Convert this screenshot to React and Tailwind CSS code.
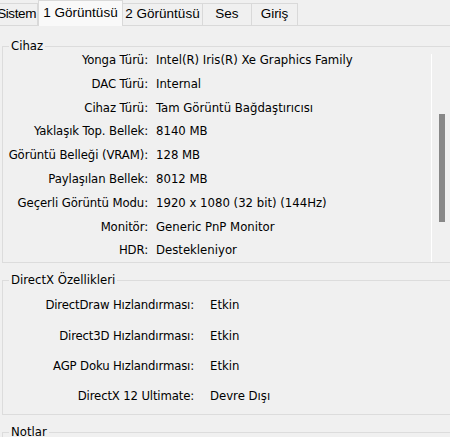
import React from "react";

const tabs = [
  { name: "Sistem", w: "w-[52px] ml-[-14px] justify-end pr-[1px] tracking-[-0.4px]" },
  { name: "1 Görüntüsü", w: "w-[85px] justify-center", active: true },
  { name: "2 Görüntüsü", w: "w-[80px] justify-center" },
  { name: "Ses", w: "w-[49px] justify-center" },
  { name: "Giriş", w: "w-[46px] justify-center" },
];

const device = [
  ["Yonga Türü:", "Intel(R) Iris(R) Xe Graphics Family"],
  ["DAC Türü:", "Internal"],
  ["Cihaz Türü:", "Tam Görüntü Bağdaştırıcısı"],
  ["Yaklaşık Top. Bellek:", "8140 MB"],
  ["Görüntü Belleği (VRAM):", "128 MB"],
  ["Paylaşılan Bellek:", "8012 MB"],
  ["Geçerli Görüntü Modu:", "1920 x 1080 (32 bit) (144Hz)"],
  ["Monitör:", "Generic PnP Monitor"],
  ["HDR:", "Destekleniyor"],
];

const dx = [
  ["DirectDraw Hızlandırması:", "Etkin"],
  ["Direct3D Hızlandırması:", "Etkin"],
  ["AGP Doku Hızlandırması:", "Etkin"],
  ["DirectX 12 Ultimate:", "Devre Dışı"],
];

const Group = ({ title, className, children }) => (
  <div className={`relative ml-[2px] w-[470px] border border-[#dcdcdc] ${className}`}>
    <span className="absolute left-[6px] top-[-10px] bg-[#f0f0f0] px-[2px] leading-[18px]">{title}</span>
    {children}
  </div>
);

export default function App() {
  return (
    <div
      className="w-[450px] h-[437px] overflow-hidden bg-[#f0f0f0] text-black text-[13px]"
      style={{ fontFamily: '"DejaVu Sans Condensed", "DejaVu Sans", sans-serif' }}
    >
      <div
        className="flex items-end h-[26px] border-b border-[#d9d9d9]"
        style={{ fontFamily: '"Liberation Sans", Arial, sans-serif' }}
      >
        {tabs.map((t) => (
          <div
            key={t.name}
            className={`flex shrink-0 items-center border-[#d9d9d9] border-t border-r text-[13.5px] ${t.w} ${
              t.active
                ? "h-[26px] bg-[#f9f9f9] border-l mb-[-1px]"
                : "h-[22px] bg-[#f0f0f0]"
            }`}
          >
            {t.name}
          </div>
        ))}
      </div>

      <Group title="Cihaz" className="mt-[20px] h-[217px]">
        <div className="flex h-full">
          <div className="flex flex-col w-[428px] pt-[1px]">
            {device.map(([k, v]) => (
              <div key={k} className="flex items-center h-[23.9px]">
                <span className="w-[145px] text-right whitespace-nowrap tracking-[-0.1px]">{k}</span>
                <span className="ml-[8px] whitespace-nowrap">{v}</span>
              </div>
            ))}
          </div>
          <div className="w-px bg-white mt-[7px]" />
          <div className="flex flex-col">
            <div className="ml-[7px] mt-[67px] h-[108px] w-[6px] bg-[#888888]" />
          </div>
        </div>
      </Group>

      <Group title="DirectX Özellikleri" className="mt-[17px] h-[135px]">
        <div className="flex flex-col pt-[9px]">
          {dx.map(([k, v]) => (
            <div key={k} className="flex items-center h-[30.3px]">
              <span className="w-[191px] text-right whitespace-nowrap tracking-[-0.15px]">{k}</span>
              <span className="ml-[16px] whitespace-nowrap">{v}</span>
            </div>
          ))}
        </div>
      </Group>

      <Group title="Notlar" className="mt-[17px] h-[60px]" />
    </div>
  );
}
